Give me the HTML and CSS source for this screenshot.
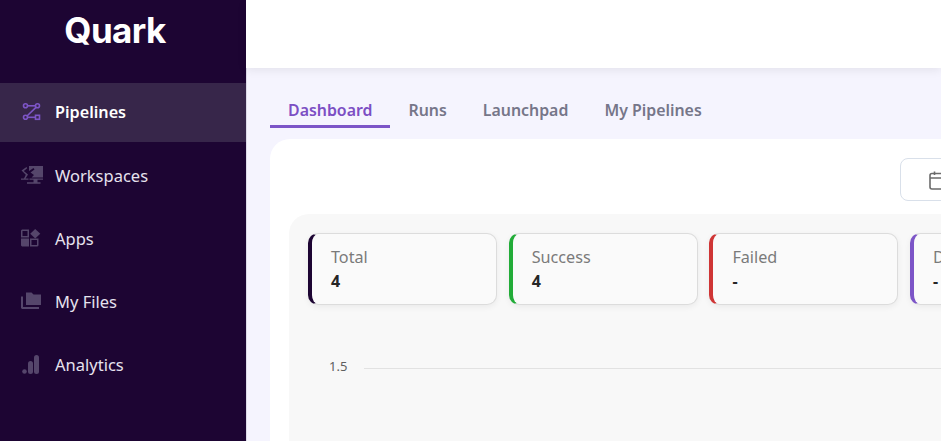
FILE: index.html
```html
<!DOCTYPE html>
<html lang="en">
<head>
  <meta charset="UTF-8" />
  <title>Quark</title>
  <link rel="stylesheet" href="styles.css">
</head>
<body>
  <div class="sidebar">
    <div class="logo">Quark</div>
    <div class="nav">
      <div class="nav-item active">
        <svg class="nav-icon" viewBox="0 0 23 19" fill="none" stroke="#7d55c7" stroke-width="1.6">
          <circle cx="5.5" cy="2.8" r="2"/>
          <path d="M7.5 2.8H15.5"/>
          <circle cx="17.5" cy="2.8" r="2"/>
          <path d="M16 4.3L7 13"/>
          <circle cx="5.5" cy="14.3" r="2"/>
          <path d="M7.5 14.3H15.5"/>
          <rect x="15.5" y="12.3" width="4" height="4"/>
        </svg>
        <span>Pipelines</span>
      </div>
      <div class="nav-item">
        <svg class="nav-icon" viewBox="0 0 23 19" fill="#55466b">
          <path d="M9 0H23V11.5H11.5L14 9L10.5 6.5L14.5 3.5L13.5 2L9 5Z"/>
          <path d="M1.5 4.5L6.5 1L7.2 2.2L3.8 5L8 8.5L5.5 12.5H8.5V13.8H1V12.5H4L5.8 8.8Z"/>
          <path d="M9.5 12.5H23V13.8H17.5V16.2H20.5V17.7H7V16.2H13.5V13.8H9.5Z"/>
        </svg>
        <span>Workspaces</span>
      </div>
      <div class="nav-item">
        <svg class="nav-icon" viewBox="0 0 23 19" fill="#55466b">
          <path d="M2 0.5H9V8.5H1V1.5ZM2.5 2V7H7.5V2Z" fill-rule="evenodd"/>
          <path d="M15.2 0L20.3 4.8L15.2 9.6L10.2 4.8Z"/>
          <path d="M1 9.5H9V17.5H2L1 16.5Z"/>
          <path d="M10 9.5H18.5V16.5L17.5 17.5H10ZM11.5 11V16H17V11Z" fill-rule="evenodd"/>
        </svg>
        <span>Apps</span>
      </div>
      <div class="nav-item">
        <svg class="nav-icon" viewBox="0 0 23 19" fill="#55466b">
          <path d="M6 0.5H11.5L13.5 2.5H21V13H6Z"/>
          <path d="M1 4.5H3V15H19V17H2L1 16Z"/>
        </svg>
        <span>My Files</span>
      </div>
      <div class="nav-item">
        <svg class="nav-icon" viewBox="0 0 23 19" fill="#55466b">
          <circle cx="4.5" cy="16.5" r="2.3"/>
          <rect x="8" y="6" width="5" height="13" rx="2.5"/>
          <rect x="14" y="0" width="5" height="19" rx="2.5"/>
        </svg>
        <span>Analytics</span>
      </div>
    </div>
  </div>

  <div class="main">
    <div class="topbar"></div>
    <div class="content">
      <div class="tabs">
        <div class="tab active">Dashboard</div>
        <div class="tab">Runs</div>
        <div class="tab">Launchpad</div>
        <div class="tab">My Pipelines</div>
      </div>

      <div class="panel">
        <div class="toolbar">
          <div class="date-btn">
            <svg class="date-icon" viewBox="0 0 20 20" fill="none" stroke="#6b6b6b" stroke-width="1.6">
              <rect x="1" y="3.5" width="17" height="15.5" rx="2"/>
              <path d="M1 8H18M5.5 1.5V5M13.5 1.5V5"/>
            </svg>
          </div>
        </div>

        <div class="stats">
          <div class="cards">
            <div class="card total">
              <div class="card-label">Total</div>
              <div class="card-value">4</div>
            </div>
            <div class="card success">
              <div class="card-label">Success</div>
              <div class="card-value">4</div>
            </div>
            <div class="card failed">
              <div class="card-label">Failed</div>
              <div class="card-value">-</div>
            </div>
            <div class="card duration">
              <div class="card-label">Duration</div>
              <div class="card-value">-</div>
            </div>
          </div>

          <div class="chart-row">
            <span class="tick">1.5</span>
            <div class="grid-line"></div>
          </div>
        </div>
      </div>
    </div>
  </div>
</body>
</html>
```

FILE: styles.css
```css
html, body {
  height: 100%;
}

body {
  margin: 0;
  display: flex;
  overflow: hidden;
  font-family: "Noto Sans", sans-serif;
  background: #f5f4fe;
}

.sidebar {
  width: 246px;
  flex: none;
  background: #1d0533;
  color: #e6e2ee;
}

.logo {
  height: 83px;
  padding-top: 8px;
  padding-right: 16px;
  box-sizing: border-box;
  text-align: center;
  font-family: Inter, sans-serif;
  font-size: 35px;
  line-height: 44px;
  font-weight: 700;
  letter-spacing: -0.6px;
  color: #fff;
}

.nav {
  display: flex;
  flex-direction: column;
  gap: 4px;
}

.nav-item {
  height: 59px;
  display: flex;
  align-items: center;
  padding-left: 20px;
  font-size: 16.5px;
}

.nav-item.active {
  background: #37264a;
  color: #fff;
  font-size: 16.2px;
  font-weight: 600;
}

.nav-item.active span {
  margin-bottom: 2px;
}

.nav-icon {
  width: 23px;
  height: 19px;
  flex: none;
  margin-right: 12px;
}

.main {
  flex: 1;
  min-width: 0;
  box-shadow: inset 1px 0 0 #dcdae8;
}

.topbar {
  height: 68px;
  background: #fff;
  box-shadow: 0 2px 9px rgba(0, 0, 0, 0.08);
  position: relative;
}

.content {
  padding: 29px 0 0 24px;
}

.tabs {
  display: flex;
  height: 31px;
}

.tab {
  padding: 0 18px;
  height: 31px;
  box-sizing: border-box;
  font-size: 15.9px;
  line-height: 26px;
  font-weight: 600;
  color: #767689;
}

.tab.active {
  color: #7c4fc4;
  border-bottom: 3px solid #7c55c7;
}

.panel {
  margin-top: 11px;
  width: 720px;
  height: 320px;
  padding: 19px;
  background: #fff;
  border-radius: 20px 0 0 0;
}

.toolbar {
  display: flex;
  height: 56px;
  padding-left: 611px;
}

.date-btn {
  width: 120px;
  height: 43px;
  flex: none;
  display: flex;
  align-items: center;
  padding-left: 28px;
  box-sizing: border-box;
  background: #fff;
  border: 1px solid #d9e0ea;
  border-radius: 8px;
}

.date-icon {
  width: 20px;
  height: 20px;
}

.stats {
  height: 300px;
  width: 720px;
  padding: 19px;
  background: #f8f8f8;
  border-radius: 20px 0 0 0;
}

.cards {
  display: flex;
  gap: 11.7px;
}

.card {
  flex: 0 0 189px;
  height: 72px;
  box-sizing: border-box;
  padding: 11px 0 0 19px;
  background: #fafafa;
  border: 1px solid #dcdcdc;
  border-radius: 10px;
  box-shadow: 0 2px 6px rgba(0, 0, 0, 0.06);
}

.total { border-left: 4px solid #1d0533; }
.success { border-left: 4px solid #22ac38; }
.failed { border-left: 4px solid #cf3535; }
.duration { border-left: 4px solid #7c55c7; }

.card-label {
  font-size: 16.2px;
  line-height: 24px;
  color: #7a7a7a;
}

.card-value {
  font-size: 16px;
  line-height: 24px;
  font-weight: 700;
  color: #262626;
}

.chart-row {
  display: flex;
  align-items: center;
  margin-top: 52px;
  padding-left: 21px;
}

.tick {
  width: 35px;
  flex: none;
  font-size: 13px;
  line-height: 18px;
  color: #5f5f5f;
}

.grid-line {
  flex: 1;
  height: 1px;
  margin-top: 5px;
  background: #e2e2e2;
}
```
